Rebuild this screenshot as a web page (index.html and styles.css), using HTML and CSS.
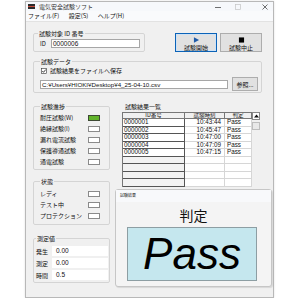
FILE: index.html
```html
<!DOCTYPE html>
<html>
  <head>
    <meta charset="utf-8" />
    <title>電気安全試験ソフト</title>
    <link rel="stylesheet" href="styles.css">
  </head>
  <body>
    <div class="window">
      <div class="titlebar">
        <svg class="app-icon" viewBox="0 0 7 5">
          <rect width="7" height="5" fill="#2b2b2b"/>
          <rect y="2" width="7" height="1" fill="#c84a3a"/>
        </svg>
        <span class="title">電気安全試験ソフト</span>
        <span class="win-ctrl">
          <svg width="6" height="6" viewBox="0 0 6 6"><path d="M0 3.5 H6" stroke="#333" stroke-width="0.7"/></svg>
        </span>
        <span class="win-ctrl">
          <svg width="6" height="6" viewBox="0 0 6 6"><rect x="0.5" y="0.5" width="5" height="5" fill="none" stroke="#c4c4c4" stroke-width="0.7"/></svg>
        </span>
        <span class="win-ctrl close">
          <svg width="6" height="6" viewBox="0 0 6 6"><path d="M0.5 0.5 L5.5 5.5 M5.5 0.5 L0.5 5.5" stroke="#333" stroke-width="0.7"/></svg>
        </span>
      </div>
      <div class="menubar">
        <span>ファイル(F)</span>
        <span>設定(S)</span>
        <span>ヘルプ(H)</span>
      </div>

      <div class="content">
        <div class="top-row">
          <fieldset class="group id-group">
            <legend>試験対象 ID 番号</legend>
            <div class="id-row">
              <span class="id-label">ID</span>
              <div class="input">0000006</div>
            </div>
          </fieldset>
          <div class="buttons">
            <button class="btn primary">
              <svg width="7" height="7" viewBox="0 0 7 7"><path d="M0.5 0.3 L6.5 3.5 L0.5 6.7 Z" fill="#1e5aa8"/></svg>
              <span>試験開始</span>
            </button>
            <button class="btn">
              <svg width="7" height="7" viewBox="0 0 7 7"><rect x="0.5" y="0.5" width="6" height="6" fill="#000"/></svg>
              <span>試験中止</span>
            </button>
          </div>
        </div>

        <fieldset class="group data-group">
          <legend>試験データ</legend>
          <div class="check-row">
            <svg class="check" viewBox="0 0 6 6"><rect x="0.5" y="0.5" width="5" height="5" fill="#fff" stroke="#333" stroke-width="0.6"/><path d="M1.3 3 L2.5 4.3 L4.8 1.5" fill="none" stroke="#111" stroke-width="0.8"/></svg>
            <span>試験結果をファイルへ保存</span>
          </div>
          <div class="path-row">
            <div class="input path">C:¥Users¥HIOKI¥Desktop¥4_25-04-10.csv</div>
            <button class="btn browse">参照...</button>
          </div>
        </fieldset>

        <div class="lower">
          <div class="left-col">
            <fieldset class="group progress-group">
              <legend>試験進捗</legend>
              <div class="lamp-row"><span>耐圧試験(W)</span><i class="lamp on"></i></div>
              <div class="lamp-row"><span>絶縁試験(I)</span><i class="lamp"></i></div>
              <div class="lamp-row"><span>漏れ電流試験</span><i class="lamp"></i></div>
              <div class="lamp-row"><span>保護導通試験</span><i class="lamp"></i></div>
              <div class="lamp-row"><span>通電試験</span><i class="lamp"></i></div>
            </fieldset>

            <fieldset class="group state-group">
              <legend>状態</legend>
              <div class="lamp-row"><span>レディ</span><i class="lamp"></i></div>
              <div class="lamp-row"><span>テスト中</span><i class="lamp"></i></div>
              <div class="lamp-row"><span>プロテクション</span><i class="lamp"></i></div>
            </fieldset>

            <fieldset class="group measure-group">
              <legend>測定値</legend>
              <div class="value-row"><span class="value-label">発生</span><span class="value">0.00</span></div>
              <div class="value-row"><span class="value-label">測定</span><span class="value">0.00</span></div>
              <div class="value-row"><span class="value-label">時間</span><span class="value">0.5</span></div>
            </fieldset>
          </div>

          <div class="right-col">
            <div class="list-title">試験結果一覧</div>
            <div class="list">
              <div class="grid">
                <div class="cell head">ID番号</div><div class="cell head">試験時刻</div><div class="cell head">判定</div>
                <div class="cell id">0000001</div><div class="cell time">10:43:44</div><div class="cell res">Pass</div>
                <div class="cell id">0000002</div><div class="cell time">10:45:47</div><div class="cell res">Pass</div>
                <div class="cell id">0000003</div><div class="cell time">10:47:00</div><div class="cell res">Pass</div>
                <div class="cell id">0000004</div><div class="cell time">10:47:09</div><div class="cell res">Pass</div>
                <div class="cell id">0000005</div><div class="cell time">10:47:15</div><div class="cell res">Pass</div>
                <div class="cell id empty"></div><div class="cell time"></div><div class="cell res"></div>
                <div class="cell id empty"></div><div class="cell time"></div><div class="cell res"></div>
                <div class="cell id empty"></div><div class="cell time"></div><div class="cell res"></div>
                <div class="cell id empty"></div><div class="cell time"></div><div class="cell res"></div>
              </div>
              <div class="scrollbar">
                <div class="scroll-up">
                  <svg width="5" height="4" viewBox="0 0 5 4"><path d="M0 3.5 L2.5 0.5 L5 3.5 Z" fill="#111"/></svg>
                </div>
                <div class="thumb"></div>
              </div>
            </div>

            <div class="result-panel">
              <div class="panel-title">試験結果</div>
              <div class="verdict-label">判定</div>
              <div class="verdict">Pass</div>
            </div>
          </div>
        </div>
      </div>
    </div>
  </body>
</html>
```

FILE: styles.css
```css
body {
  margin: 0;
  background: #fff;
  font-family: "Noto Sans CJK JP", "Liberation Sans", sans-serif;
  font-size: 6px;
  color: #111;
}

.window {
  margin: 1px 0 0 25px;
  width: 249px;
  height: 297px;
  box-sizing: border-box;
  border: 1px solid #b8b8b8;
  background: #f0f0f0;
  box-shadow: 0 0 2px rgba(0, 0, 0, 0.12);
}

/* title + menu */
.titlebar {
  height: 9px;
  display: flex;
  align-items: center;
  padding-left: 2px;
  background: #f6f8fb;
}

.app-icon {
  width: 7px;
  height: 5px;
  margin-right: 4px;
}

.title {
  flex: 1;
  line-height: 9px;
  color: #333;
}

.win-ctrl {
  width: 20px;
  height: 9px;
  display: flex;
  align-items: center;
  justify-content: center;
}

.win-ctrl.close {
  width: 17px;
  margin-left: 8px;
}

.menubar {
  height: 10px;
  line-height: 10px;
  padding-left: 2px;
  background: #f9fafc;
  border-bottom: 1px solid #e2e2e2;
}

.menubar span {
  margin-right: 8px;
}

.content {
  padding: 8px 1px 0 7px;
}

/* group boxes */
.group {
  margin: 0;
  box-sizing: border-box;
  border: 1px solid #d4d4d4;
  border-radius: 2px;
  min-inline-size: 0;
}

.group legend {
  padding: 0 1px;
  line-height: 7px;
  font-size: 6px;
}

.top-row {
  display: flex;
}

.id-group {
  width: 112px;
  height: 22px;
  padding: 0 2px 0 4px;
}

.id-row {
  display: flex;
  align-items: center;
  margin-top: 2px;
}

.id-label {
  width: 13px;
  padding-left: 2px;
  box-sizing: border-box;
}

.input {
  background: #fff;
  border: 1px solid #a6a6a6;
  box-sizing: border-box;
  height: 9px;
  line-height: 8px;
  font-size: 6.5px;
  padding-left: 1px;
  font-family: "Liberation Sans", sans-serif;
  white-space: nowrap;
  overflow: hidden;
}

.id-row .input {
  width: 89px;
}

.buttons {
  display: flex;
  gap: 3px;
  margin: 3px 0 0 30px;
}

.btn {
  width: 42px;
  height: 19px;
  padding: 3px 0 0;
  box-sizing: border-box;
  border: 1px solid #adadad;
  background: #e1e1e1;
  font-family: inherit;
  font-size: 6px;
  color: #111;
  display: flex;
  flex-direction: column;
  align-items: center;
  line-height: 7px;
}

.btn span {
  margin-top: 1px;
}

.btn.primary {
  border-color: #0b63b8;
  box-shadow: inset 0 0 0 1px #cfe2f5;
}

.data-group {
  width: 229px;
  height: 35px;
  margin-top: 6px;
  padding: 0 3px 0 6px;
}

.check-row {
  display: flex;
  align-items: center;
  height: 7px;
  margin-top: 2px;
}

.check {
  width: 6px;
  height: 6px;
  margin: 0 3px 0 1px;
}

.path-row {
  display: flex;
  align-items: center;
  height: 14px;
  margin-top: 3px;
}

.input.path {
  width: 188px;
  font-size: 6.2px;
}

.btn.browse {
  width: 26px;
  height: 14px;
  margin-left: 4px;
  padding: 0;
  justify-content: center;
}

/* lower area */
.lower {
  display: flex;
  margin-top: 10px;
}

.left-col {
  width: 77px;
}

.progress-group {
  height: 67px;
  padding: 2px 9px 0 6px;
}

.state-group {
  height: 47px;
  margin-top: 8px;
  padding: 3px 9px 0 6px;
}

.lamp-row {
  display: flex;
  align-items: center;
  justify-content: space-between;
  height: 11px;
}

.lamp {
  width: 12px;
  height: 6px;
  box-sizing: border-box;
  border: 1px solid #8a8a8a;
  background: #fff;
}

.lamp.on {
  background: #62b42c;
  border-color: #3d4a34;
}

.measure-group {
  height: 48px;
  margin-top: 10px;
  padding: 4px 1px 0 2px;
}

.value-row {
  display: flex;
  align-items: center;
  height: 10px;
  margin-bottom: 2px;
}

.value-label {
  width: 16px;
}

.value {
  flex: 1;
  height: 10px;
  line-height: 10px;
  background: #fff;
  padding-left: 4px;
  font-family: "Liberation Sans", sans-serif;
  font-size: 6.5px;
}

.right-col {
  width: 157px;
  margin-left: 5px;
}

.list-title {
  line-height: 7px;
  margin-left: 10px;
}

/* result list */
.list {
  display: flex;
  width: 138px;
  height: 75px;
  margin: 2px 0 0 7px;
  overflow: hidden;
  border-left: 1px solid #777;
  box-sizing: border-box;
}

.grid {
  display: grid;
  grid-template-columns: 62px 40px 27px;
  grid-auto-rows: 7.5px;
  grid-template-rows: 7px;
  align-content: start;
  background: #fff;
}

.cell {
  box-sizing: border-box;
  border-right: 1px solid #d6d6d6;
  border-bottom: 1px solid #d6d6d6;
  font-family: "Liberation Sans", sans-serif;
  font-size: 6.3px;
  line-height: 6.5px;
  white-space: nowrap;
  overflow: hidden;
}

.cell.head {
  background: #f0f0f0;
  text-align: center;
  border-top: 1px solid #777;
  border-color: #777;
  font-family: "Noto Sans CJK JP", sans-serif;
  font-size: 5.5px;
  line-height: 5px;
}

.cell.id {
  padding-left: 1px;
  border-color: #555;
}

.cell.id.empty {
  background: #f2f2f2;
}

.cell.time {
  text-align: right;
  padding-right: 3px;
}

.cell.res {
  padding-left: 2px;
}

.scrollbar {
  width: 8px;
  background: #f0f0f0;
}

.scroll-up {
  height: 8px;
  box-sizing: border-box;
  border: 1px solid #888;
  background: #fff;
  display: flex;
  align-items: center;
  justify-content: center;
}

.thumb {
  height: 8px;
  margin-top: 2px;
  box-sizing: border-box;
  border: 1px solid #bdbdbd;
  background: #e8e8e8;
}

/* result panel */
.result-panel {
  width: 157px;
  height: 98px;
  margin-top: 2px;
  box-sizing: border-box;
  border: 1px solid #c6c6c6;
  border-radius: 3px;
  background: #f4f4f4;
  box-shadow: 1px 1px 1px rgba(0, 0, 0, 0.1);
}

.panel-title {
  height: 12px;
  line-height: 11px;
  padding-left: 4px;
  font-size: 4px;
  background: #f8f9fb;
}

.verdict-label {
  margin-top: 5px;
  line-height: 16px;
  font-size: 14px;
  text-align: center;
}

.verdict {
  width: 130px;
  height: 54px;
  margin: 4px 0 0 11px;
  box-sizing: border-box;
  border: 1px solid #8d9ea3;
  background: #c5e7ee;
  text-align: center;
  line-height: 52px;
  font-family: "Liberation Sans", sans-serif;
  font-style: italic;
  font-size: 44px;
  color: #000;
}
```
